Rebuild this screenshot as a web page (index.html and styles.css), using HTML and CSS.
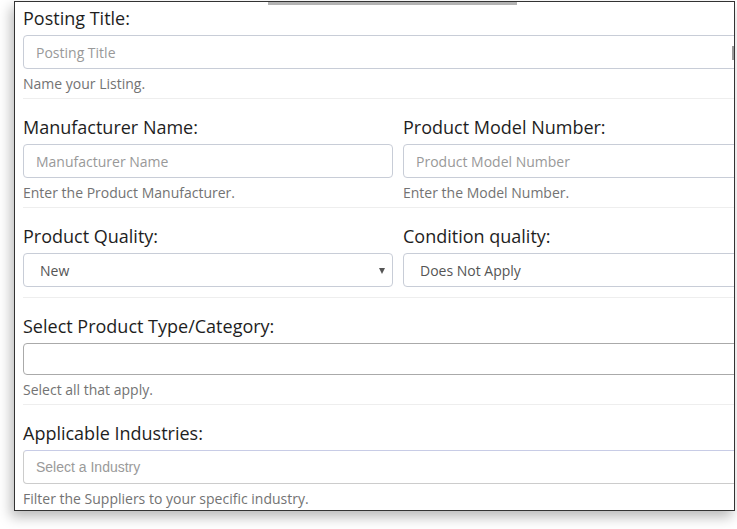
FILE: index.html
```html
<!DOCTYPE html>
<html>
<head>
<meta charset="utf-8">
<link rel="stylesheet" href="styles.css">
</head>
<body>
<div class="frame">
  <div class="tabbar"></div>
  <div class="thumb"></div>
  <div class="form">
    <div class="group first">
      <div class="label">Posting Title:</div>
      <div class="input"><span class="ph">Posting Title</span></div>
      <div class="help">Name your Listing.</div>
    </div>
    <div class="group cols">
      <div class="col">
        <div class="label">Manufacturer Name:</div>
        <div class="input"><span class="ph">Manufacturer Name</span></div>
        <div class="help">Enter the Product Manufacturer.</div>
      </div>
      <div class="col">
        <div class="label">Product Model Number:</div>
        <div class="input"><span class="ph">Product Model Number</span></div>
        <div class="help">Enter the Model Number.</div>
      </div>
    </div>
    <div class="group cols nohelp">
      <div class="col">
        <div class="label">Product Quality:</div>
        <div class="select"><span>New</span><span class="arrow"></span></div>
      </div>
      <div class="col">
        <div class="label">Condition quality:</div>
        <div class="select"><span>Does Not Apply</span><span class="arrow"></span></div>
      </div>
    </div>
    <div class="group">
      <div class="label">Select Product Type/Category:</div>
      <div class="multi"></div>
      <div class="help">Select all that apply.</div>
    </div>
    <div class="group last">
      <div class="label">Applicable Industries:</div>
      <div class="input industry"><span class="ph arial">Select a Industry</span></div>
      <div class="help">Filter the Suppliers to your specific industry.</div>
    </div>
  </div>
</div>
</body>
</html>
```

FILE: styles.css
```css
html, body {
  margin: 0;
  padding: 0;
  background: #ffffff;
}

body {
  font-family: "Open Sans", "Liberation Sans", sans-serif;
  width: 737px;
  height: 529px;
  overflow: hidden;
}

.frame {
  position: relative;
  margin: 1px 0 0 14px;
  width: 719px;
  height: 508px;
  border: 1px solid #333333;
  background: #ffffff;
  box-shadow: -3px 6px 12px rgba(0, 0, 0, 0.28);
  overflow: hidden;
}

.tabbar {
  position: absolute;
  top: 0;
  left: 253px;
  width: 249px;
  height: 3px;
  background: #b3b3b3;
}

.thumb {
  position: absolute;
  top: 44px;
  right: 0;
  width: 2px;
  height: 14px;
  background: #9a9a9a;
}

.form {
  width: 750px;
  padding-left: 8px;
  padding-top: 4px;
}

.group {
  padding-top: 16px;
  padding-bottom: 4px;
  border-bottom: 1px solid #eeeeee;
}

.group.first {
  padding-top: 0;
}

.group.last {
  border-bottom: none;
}

.group.nohelp {
  padding-bottom: 10px;
}

.cols {
  display: grid;
  grid-template-columns: 370px 370px;
  column-gap: 10px;
}

.label {
  font-size: 18px;
  line-height: 24px;
  color: #1e1e1e;
  margin-bottom: 5px;
}

.input,
.select,
.multi {
  box-sizing: border-box;
  height: 34px;
  border: 1px solid #c8cdd7;
  border-radius: 4px;
  display: flex;
  align-items: center;
  font-size: 14px;
}

.input {
  padding-left: 12px;
}

.ph {
  color: #999999;
}

.ph.arial {
  font-family: "Liberation Sans", Arial, sans-serif;
  color: #9a9a9a;
}

.industry {
  border-color: #cccccc;
  border-top-color: #c8cce6;
}

.select {
  padding-left: 16px;
  padding-right: 7px;
  justify-content: space-between;
  color: #555555;
}

.arrow {
  width: 0;
  height: 0;
  border-left: 3.5px solid transparent;
  border-right: 3.5px solid transparent;
  border-top: 6px solid #555555;
  margin-top: 1px;
}

.multi {
  height: 32px;
  border-color: #aaaaaa;
}

.help {
  font-size: 14px;
  line-height: 20px;
  color: #737373;
  margin-top: 5px;
}
```
